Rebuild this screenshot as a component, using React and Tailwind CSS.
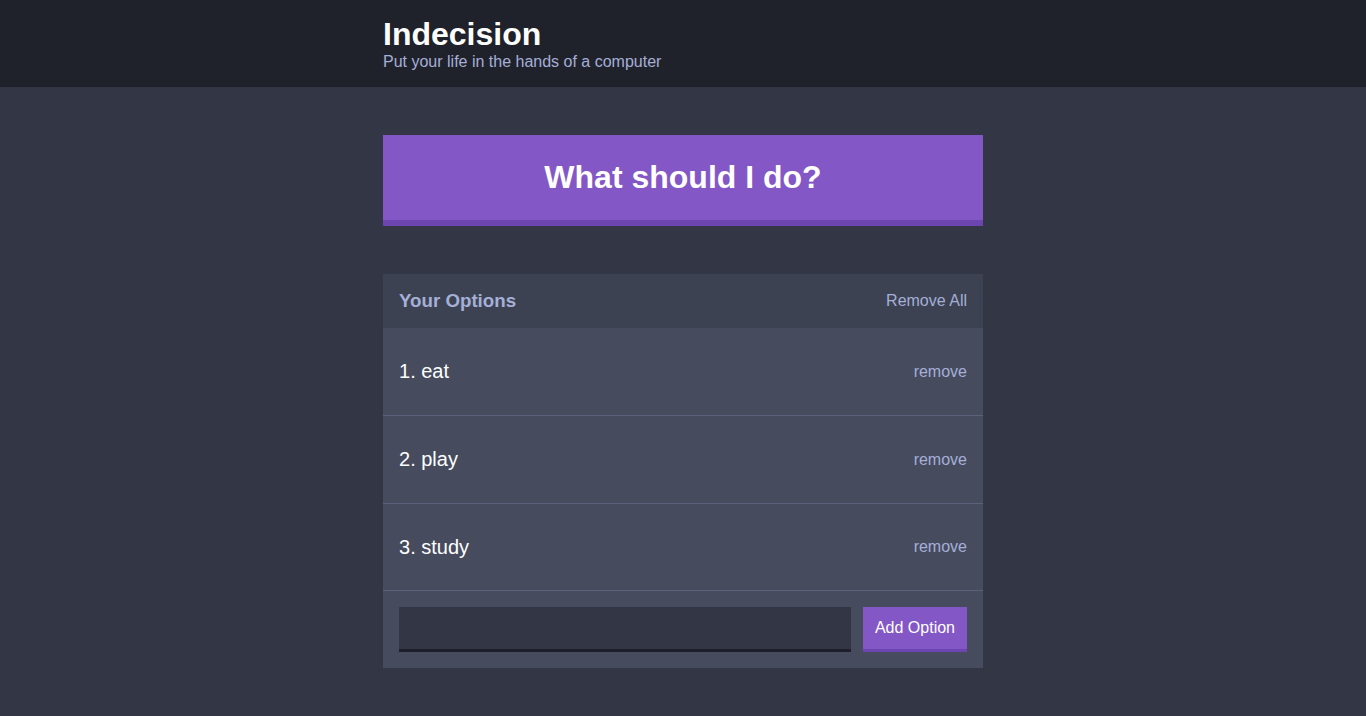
export default function App() {
  const options = ["eat", "play", "study"];
  return (
    <div className="min-h-screen bg-[#333745] text-white" style={{ fontFamily: '"Liberation Sans", Arial, Helvetica, sans-serif' }}>
      <header className="bg-[#20222b] py-4 mb-12">
        <div className="w-[600px] mx-auto">
          <h1 className="text-[32px] font-bold leading-[37px] text-white m-0">Indecision</h1>
          <h2 className="text-[16px] leading-[18px] text-[#a5afd7] font-normal m-0">Put your life in the hands of a computer</h2>
        </div>
      </header>
      <div className="w-[600px] mx-auto">
        <button className="w-full bg-[#8357c5] border-b-[6px] border-[#6c45b0] text-white font-bold text-[32px] leading-[37px] p-6 mb-12">
          What should I do?
        </button>
        <div className="bg-[#464b5e] mb-12">
          <div className="bg-[#3c4251] flex justify-between items-center p-4 text-[#a5afd7]">
            <h3 className="text-[18.72px] leading-[22px] font-bold m-0">Your Options</h3>
            <button className="text-[16px] leading-[18px] text-[#a5afd7] p-0">Remove All</button>
          </div>
          {options.map((o, i) => (
            <div key={o} className="flex justify-between items-center px-4 py-8 border-b border-[#5c627b]">
              <p className={i === 2 ? "text-white text-[20px] leading-[22px] m-0" : "text-white text-[20px] leading-[23px] m-0"}>{i + 1}. {o}</p>
              <button className="text-[16px] leading-[18px] text-[#a5afd7] p-0">remove</button>
            </div>
          ))}
          <form className="flex p-4" onSubmit={(e) => e.preventDefault()}>
            <input type="text" className="grow mr-3 bg-[#333745] border-b-[3px] border-[#1d202a] text-[#a5afd7] p-3 text-[16px] leading-[18px] outline-none" />
            <button className="bg-[#8357c5] border-b-[3px] border-[#6c45b0] text-white text-[16px] leading-[18px] p-3">Add Option</button>
          </form>
        </div>
      </div>
    </div>
  );
}
